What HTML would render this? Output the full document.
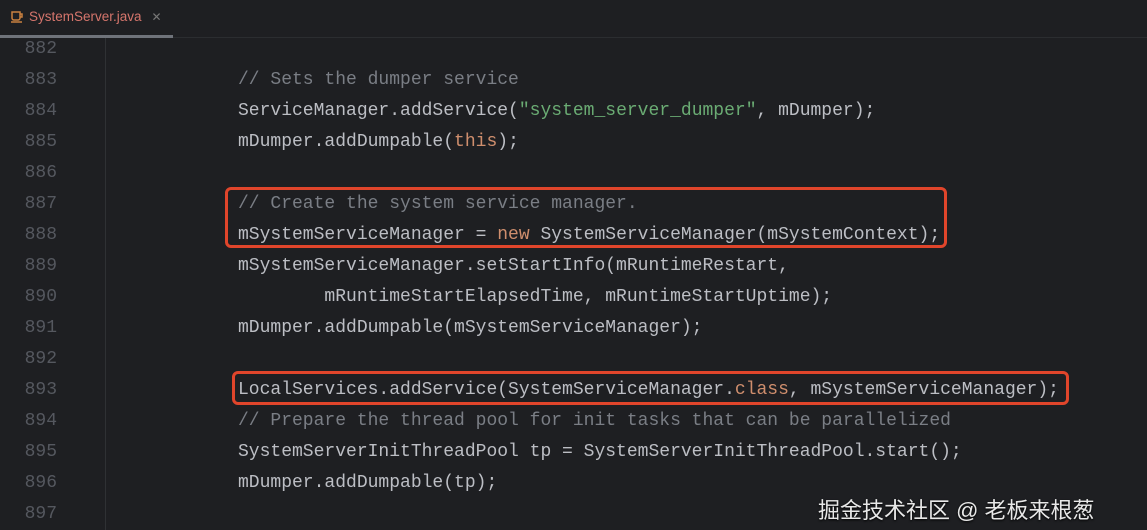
<!DOCTYPE html>
<html><head><meta charset="utf-8"><style>
html,body{margin:0;padding:0;width:1147px;height:530px;overflow:hidden;background:#1e1f22;}
.tab{position:absolute;left:0;top:0;width:1147px;height:37px;background:#1e1f22;border-bottom:1px solid #2b2d30;}
.tabt{position:absolute;left:10px;top:9px;font:13.5px "Liberation Sans",sans-serif;color:#d5756c;}
.tabt .x{color:#777;margin-left:10px;font-size:12px}
.ul{position:absolute;left:0;top:35px;width:173px;height:3px;background:#6f737a;}
.gut{position:absolute;left:105px;top:38px;width:1px;height:492px;background:#2f3134;}
.code{position:absolute;top:34px;left:0;font:18px/31px "Liberation Mono",monospace;color:#bcbec4;white-space:pre;}
.ln{display:inline-block;width:57px;text-align:right;color:#55585f;margin-right:181px;}
.c{color:#7a7e85}.s{color:#6aab73}.k{color:#cf8e6d}
.box{position:absolute;border:3px solid #e0452b;border-radius:6px;box-sizing:border-box;}
.wm{position:absolute;left:818px;top:493px;font:22px "Liberation Sans","Noto Sans CJK SC",sans-serif;color:#e8e8e8;text-shadow:0 1px 2px #000;}
</style></head><body>
<div class="tab"><div class="tabt"><svg width="14" height="13" viewBox="0 0 14 13" style="vertical-align:-2px;margin-right:5px"><path d="M2 2h8v6a2 2 0 0 1-2 2H4a2 2 0 0 1-2-2z M10 4h2v3h-2" fill="none" stroke="#c9803f" stroke-width="1.5"/><path d="M1 12h11" stroke="#c9803f" stroke-width="1.5"/></svg>SystemServer.java<span class="x">✕</span></div></div>
<div class="ul"></div>
<div class="gut"></div>
<div class="code"><span class="ln">882</span>
<span class="ln">883</span><span class="c">// Sets the dumper service</span>
<span class="ln">884</span>ServiceManager.addService(<span class="s">"system_server_dumper"</span>, mDumper);
<span class="ln">885</span>mDumper.addDumpable(<span class="k">this</span>);
<span class="ln">886</span>
<span class="ln">887</span><span class="c">// Create the system service manager.</span>
<span class="ln">888</span>mSystemServiceManager = <span class="k">new</span> SystemServiceManager(mSystemContext);
<span class="ln">889</span>mSystemServiceManager.setStartInfo(mRuntimeRestart,
<span class="ln">890</span>        mRuntimeStartElapsedTime, mRuntimeStartUptime);
<span class="ln">891</span>mDumper.addDumpable(mSystemServiceManager);
<span class="ln">892</span>
<span class="ln">893</span>LocalServices.addService(SystemServiceManager.<span class="k">class</span>, mSystemServiceManager);
<span class="ln">894</span><span class="c">// Prepare the thread pool for init tasks that can be parallelized</span>
<span class="ln">895</span>SystemServerInitThreadPool tp = SystemServerInitThreadPool.start();
<span class="ln">896</span>mDumper.addDumpable(tp);
<span class="ln">897</span></div>
<div class="box" style="left:225px;top:187px;width:722px;height:61px"></div>
<div class="box" style="left:232px;top:371px;width:837px;height:34px"></div>
<div class="wm">掘金技术社区 @ 老板来根葱</div>
</body></html>
